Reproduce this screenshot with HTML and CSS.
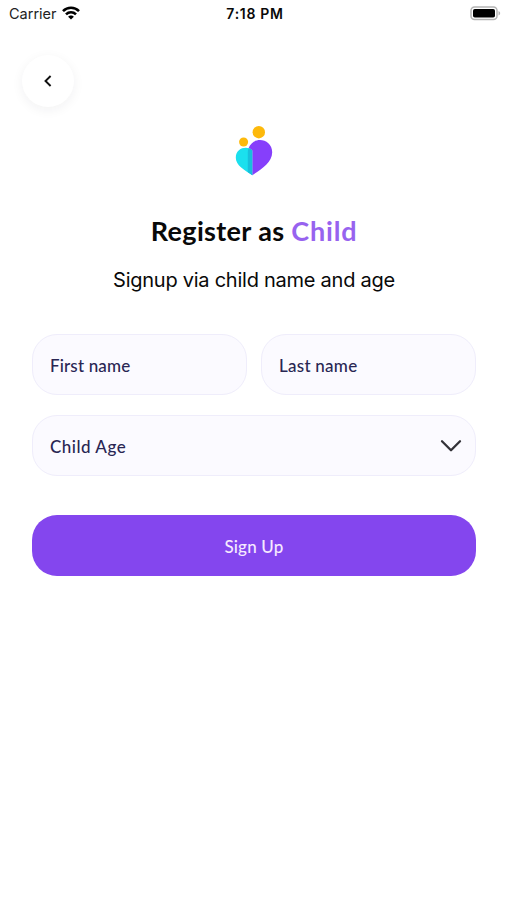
FILE: index.html
```html
<!DOCTYPE html>
<html lang="en">
<head>
<meta charset="utf-8">
<title>Register as Child</title>
<link rel="stylesheet" href="styles.css">
</head>
<body>
<header class="status">
  <div class="status-left">
    <span class="carrier">Carrier</span>
    <svg class="wifi" width="18" height="14" viewBox="0 0 18 14" fill="none" stroke="#000" stroke-width="2.6">
      <path d="M1 5.1C5.5.6 12.5.6 17 5.1M4 8.3c2.8-2.8 7.2-2.8 10 0"/>
      <path d="M6.1 10.7c1.5-1.7 4.3-1.7 5.8 0L9 13.6z" fill="#000" stroke="none"/>
    </svg>
  </div>
  <time class="clock">7:18 PM</time>
  <svg class="battery" width="31" height="15" viewBox="0 0 31 15">
    <rect x="1" y="1" width="26" height="12.5" rx="3.5" fill="#fff" stroke="#b4b4b4" stroke-width="1.5"/>
    <rect x="3" y="3" width="22" height="8.5" rx="1.8" fill="#000"/>
    <path d="M28.5 5c2.2.8 2.2 3.7 0 4.5z" fill="#b4b4b4"/>
  </svg>
</header>
<main class="page">
  <button class="back" aria-label="Back">
    <svg width="10" height="14" viewBox="0 0 10 14" fill="none" stroke="#111" stroke-width="1.9"><path d="M7.6 2 2.5 7l5.1 5"/></svg>
  </button>
  <svg class="logo" width="38" height="50" viewBox="0 0 38 50">
    <circle cx="23.8" cy="6.2" r="6.2" fill="#fdb90b"/>
    <circle cx="8.6" cy="16" r="4.5" fill="#fdb90b"/>
    <path d="M17.3 49.2V24.5C13 19.6.8 21.3.8 31.8c0 7.9 9 12.5 16.5 17.4z" fill="#1be0ee"/>
    <path d="M17.3 49.2C26 43.3 37.2 37 37.2 26.3c0-13.6-18.7-17.2-23.6-4.2 1.5.5 2.7 1.3 3.7 2.4z" fill="#863ffb"/>
    <path d="M13.6 22.1c1.5.5 2.7 1.3 3.7 2.4v24.7l-4.5-3V26.5c0-1.7.2-3 .8-4.4z" fill="#18bfdc"/>
  </svg>
  <h1 class="title">Register as <span class="accent">Child</span></h1>
  <p class="subtitle">Signup via child name and age</p>
  <form class="form">
    <div class="names">
      <div class="field"><span class="first">First name</span></div>
      <div class="field"><span class="last">Last name</span></div>
    </div>
    <div class="field select">
      <span class="age">Child Age</span>
      <svg width="22" height="14" viewBox="0 0 22 14" fill="none" stroke="#333238" stroke-width="2.3" stroke-linecap="round" stroke-linejoin="round"><path d="m2 2.3 9 9 9-9"/></svg>
    </div>
    <button class="submit" type="button">Sign Up</button>
  </form>
</main>
</body>
</html>
```
FILE: styles.css
```css
* { box-sizing: border-box; }
body {
  margin: 0;
  min-height: 900px;
  background: #fff;
  color: #090909;
  font-family: Inter, "Liberation Sans", sans-serif;
}
svg { display: block; }
button { border: 0; padding: 0; font-family: inherit; }
.status {
  height: 28px;
  padding: 0 6px 2px 9px;
  display: grid;
  grid-template-columns: 1fr auto 1fr;
  align-items: center;
}
.status-left { display: flex; align-items: center; gap: 5px; }
.carrier { font-size: 14.5px; color: #222; }
.clock { font-size: 14px; font-weight: 600; letter-spacing: .7px; }
.battery { justify-self: end; }
.page {
  padding: 27px 31px 0 32px;
  display: flex;
  flex-direction: column;
  align-items: center;
}
.back {
  align-self: flex-start;
  width: 52px;
  height: 52px;
  margin-left: -10px;
  border-radius: 50%;
  background: #fff;
  display: flex;
  align-items: center;
  justify-content: center;
  box-shadow: 0 3px 12px rgba(30, 30, 50, .06);
}
.logo { margin-top: 19px; }
.title {
  margin: 37px 0 0;
  font-family: Lato, sans-serif;
  font-size: 27px;
  font-weight: 700;
  line-height: 36px;
  letter-spacing: .35px;
  white-space: nowrap;
}
.accent { color: #9763ef; letter-spacing: .8px; }
.subtitle {
  margin: 17px 0 0;
  font-size: 20px;
  line-height: 28px;
  letter-spacing: -.25px;
  white-space: nowrap;
}
.form {
  width: 444px;
  margin-top: 40px;
  display: flex;
  flex-direction: column;
}
.names { display: grid; grid-template-columns: 1fr 1fr; gap: 14px; }
.field {
  height: 61px;
  padding: 2px 13px 0 17px;
  border: 1px solid #efedfb;
  border-radius: 25px;
  background: #fbfaff;
  color: #292653;
  font-family: Lato, sans-serif;
  font-size: 17px;
  font-weight: 500;
  display: flex;
  align-items: center;
  justify-content: space-between;
}
.first { letter-spacing: .15px; }
.last { letter-spacing: .25px; }
.age { letter-spacing: .5px; }
.select { margin-top: 20px; }
.select svg { margin-top: -2px; }
.submit {
  height: 61px;
  margin-top: 39px;
  padding-top: 2px;
  border-radius: 25px;
  background: #8446ee;
  color: #f6eaff;
  font-family: Lato, sans-serif;
  font-size: 17px;
  font-weight: 500;
  letter-spacing: .2px;
}
```
